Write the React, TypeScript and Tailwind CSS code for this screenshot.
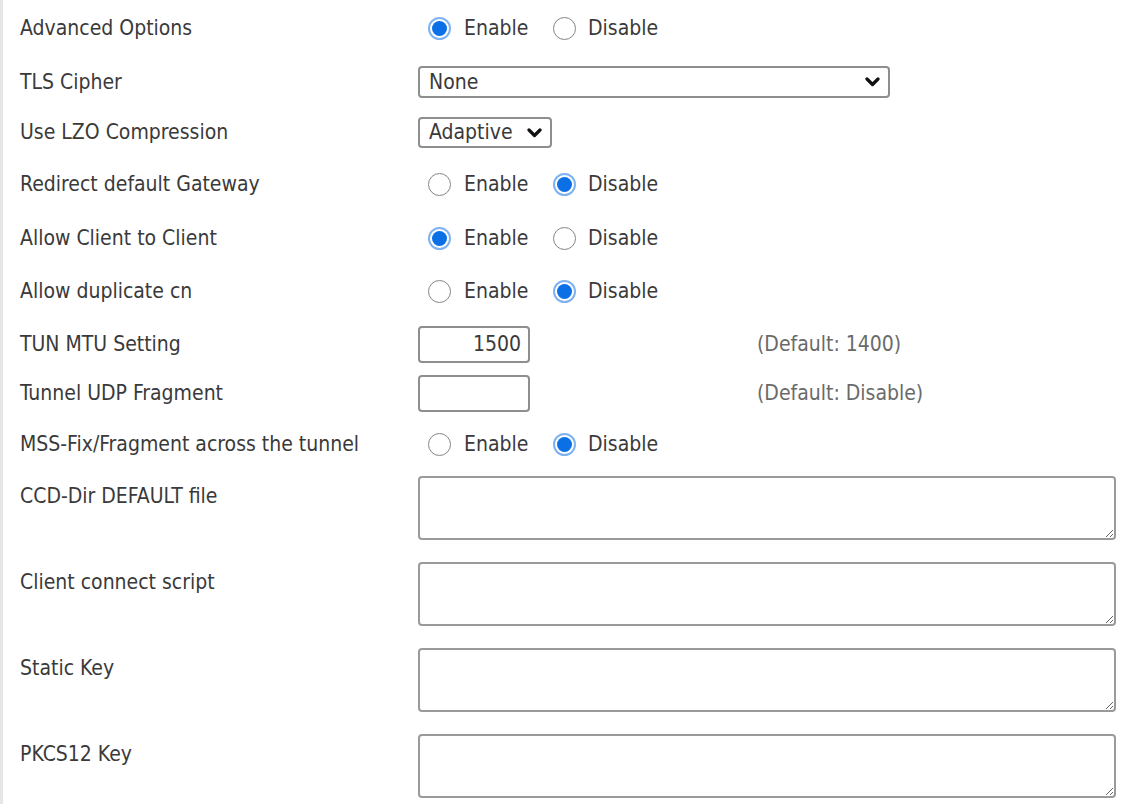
import React from "react";

const font = { fontFamily: '"DejaVu Sans Condensed", "DejaVu Sans", Tahoma, sans-serif' };

function Radio({ checked }: { checked: boolean }) {
  if (checked) {
    return (
      <span className="inline-flex w-[23px] h-[23px] rounded-full border-[2px] border-[#7fb2f0] bg-white p-[2px] shrink-0">
        <span className="block w-full h-full rounded-full bg-[#0b6fe6]" />
      </span>
    );
  }
  return <span className="inline-block w-[23px] h-[23px] rounded-full border-[1.5px] border-[#858585] bg-white shrink-0" />;
}

function RadioPair({ enable }: { enable: boolean }) {
  return (
    <div className="flex items-center pl-[10px]">
      <Radio checked={enable} />
      <span className="ml-[13px] w-[89px]">Enable</span>
      <Radio checked={!enable} />
      <span className="ml-[12px]">Disable</span>
    </div>
  );
}

function Chevron() {
  return (
    <svg width="15" height="10" viewBox="0 0 15 10" className="shrink-0">
      <polyline points="2,2 7.5,7.5 13,2" fill="none" stroke="#111" strokeWidth="3.2" strokeLinecap="round" strokeLinejoin="round" />
    </svg>
  );
}

function Select({ value, width, height }: { value: string; width: string; height: string }) {
  return (
    <div className={`flex items-center justify-between border-2 border-[#8e8e8e] rounded-[4px] bg-white pl-[9px] pr-[8px] ${width} ${height}`}>
      <span>{value}</span>
      <Chevron />
    </div>
  );
}

function Row({ label, h, children }: { label: string; h: string; children: React.ReactNode }) {
  return (
    <div className={`flex items-center ${h}`}>
      <div className="w-[398px] shrink-0">{label}</div>
      {children}
    </div>
  );
}

function TextInput({ value }: { value?: string }) {
  return (
    <div className="w-[112px] h-[37px] border-2 border-[#8e8e8e] rounded-[4px] bg-white flex items-center justify-end pr-[7px]">
      {value}
    </div>
  );
}

function AreaRow({ label, first }: { label: string; first?: boolean }) {
  return (
    <div className={`flex items-start ${first ? "mt-[4px]" : "mt-[22px]"}`}>
      <div className="w-[398px] shrink-0 pt-[10px]">{label}</div>
      <textarea className="w-[698px] h-[64px] border-2 border-[#9a9a9a] rounded-[4px] bg-white outline-none" />
    </div>
  );
}

export default function App() {
  return (
    <div style={font} className="min-h-screen bg-white border-l-[3px] border-[#e6e6e6] pl-[17px] text-[21px] text-[#3a3a3a] leading-none">
      <Row label="Advanced Options" h="h-[56px]">
        <RadioPair enable={true} />
      </Row>
      <Row label="TLS Cipher" h="h-[52px]">
        <Select value="None" width="w-[472px]" height="h-[32px]" />
      </Row>
      <Row label="Use LZO Compression" h="h-[49px]">
        <Select value="Adaptive" width="w-[134px]" height="h-[31px]" />
      </Row>
      <Row label="Redirect default Gateway" h="h-[54px]">
        <RadioPair enable={false} />
      </Row>
      <Row label="Allow Client to Client" h="h-[54px]">
        <RadioPair enable={true} />
      </Row>
      <Row label="Allow duplicate cn" h="h-[53px]">
        <RadioPair enable={false} />
      </Row>
      <Row label="TUN MTU Setting" h="h-[52px]">
        <TextInput value="1500" />
        <span className="ml-[227px] text-[#6a6a6a]">(Default: 1400)</span>
      </Row>
      <Row label="Tunnel UDP Fragment" h="h-[46px]">
        <TextInput />
        <span className="ml-[227px] text-[#6a6a6a]">(Default: Disable)</span>
      </Row>
      <Row label="MSS-Fix/Fragment across the tunnel" h="h-[56px]">
        <RadioPair enable={false} />
      </Row>
      <AreaRow label="CCD-Dir DEFAULT file" first />
      <AreaRow label="Client connect script" />
      <AreaRow label="Static Key" />
      <AreaRow label="PKCS12 Key" />
    </div>
  );
}
